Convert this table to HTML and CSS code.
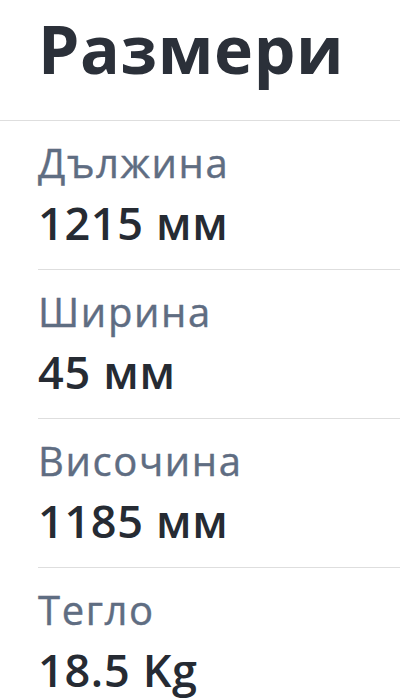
FILE: index.html
```html
<!DOCTYPE html>
<html lang="bg">
<head>
    <meta charset="UTF-8">
    <meta name="viewport" content="width=device-width, initial-scale=1.0">
    <title>Размери</title>
    <link rel="stylesheet" href="styles.css">
</head>
<body>
    <div class="specs">
        <h1 class="specs-title">Размери</h1>

        <ul class="specs-list">
            <li class="spec-item">
                <span class="spec-label">Дължина</span>
                <span class="spec-value">1215 мм</span>
            </li>
            <li class="spec-item">
                <span class="spec-label">Ширина</span>
                <span class="spec-value">45 мм</span>
            </li>
            <li class="spec-item">
                <span class="spec-label">Височина</span>
                <span class="spec-value">1185 мм</span>
            </li>
            <li class="spec-item">
                <span class="spec-label">Тегло</span>
                <span class="spec-value">18.5 Kg</span>
            </li>
        </ul>
    </div>
</body>
</html>
```

FILE: styles.css
```css
:root {
    --title-color: #2b3039;
    --label-color: #5f6d82;
    --value-color: #262b33;
    --line-color: #dedede;
}

* {
    box-sizing: border-box;
    margin: 0;
    padding: 0;
}

body {
    font-family: 'Open Sans', 'Noto Sans', sans-serif;
    background-color: #ffffff;
}

.specs-title {
    font-size: 66px;
    font-weight: 700;
    line-height: 1.2;
    letter-spacing: 0.6px;
    color: var(--title-color);
    padding: 9px 0 32px 38px;
    border-bottom: 1px solid var(--line-color);
}

.specs-list {
    list-style: none;
    padding-left: 38px;
}

.spec-item {
    display: flex;
    flex-direction: column;
    gap: 9px;
    padding: 18px 0 19px;
    border-bottom: 1px solid var(--line-color);
}

.spec-item:last-child {
    border-bottom: none;
}

.spec-label {
    font-size: 40px;
    line-height: 48px;
    letter-spacing: 1.6px;
    color: var(--label-color);
    -webkit-text-stroke: 0.4px var(--label-color);
}

.spec-value {
    font-size: 45px;
    font-weight: 600;
    line-height: 54px;
    letter-spacing: 0.7px;
    color: var(--value-color);
}
```
